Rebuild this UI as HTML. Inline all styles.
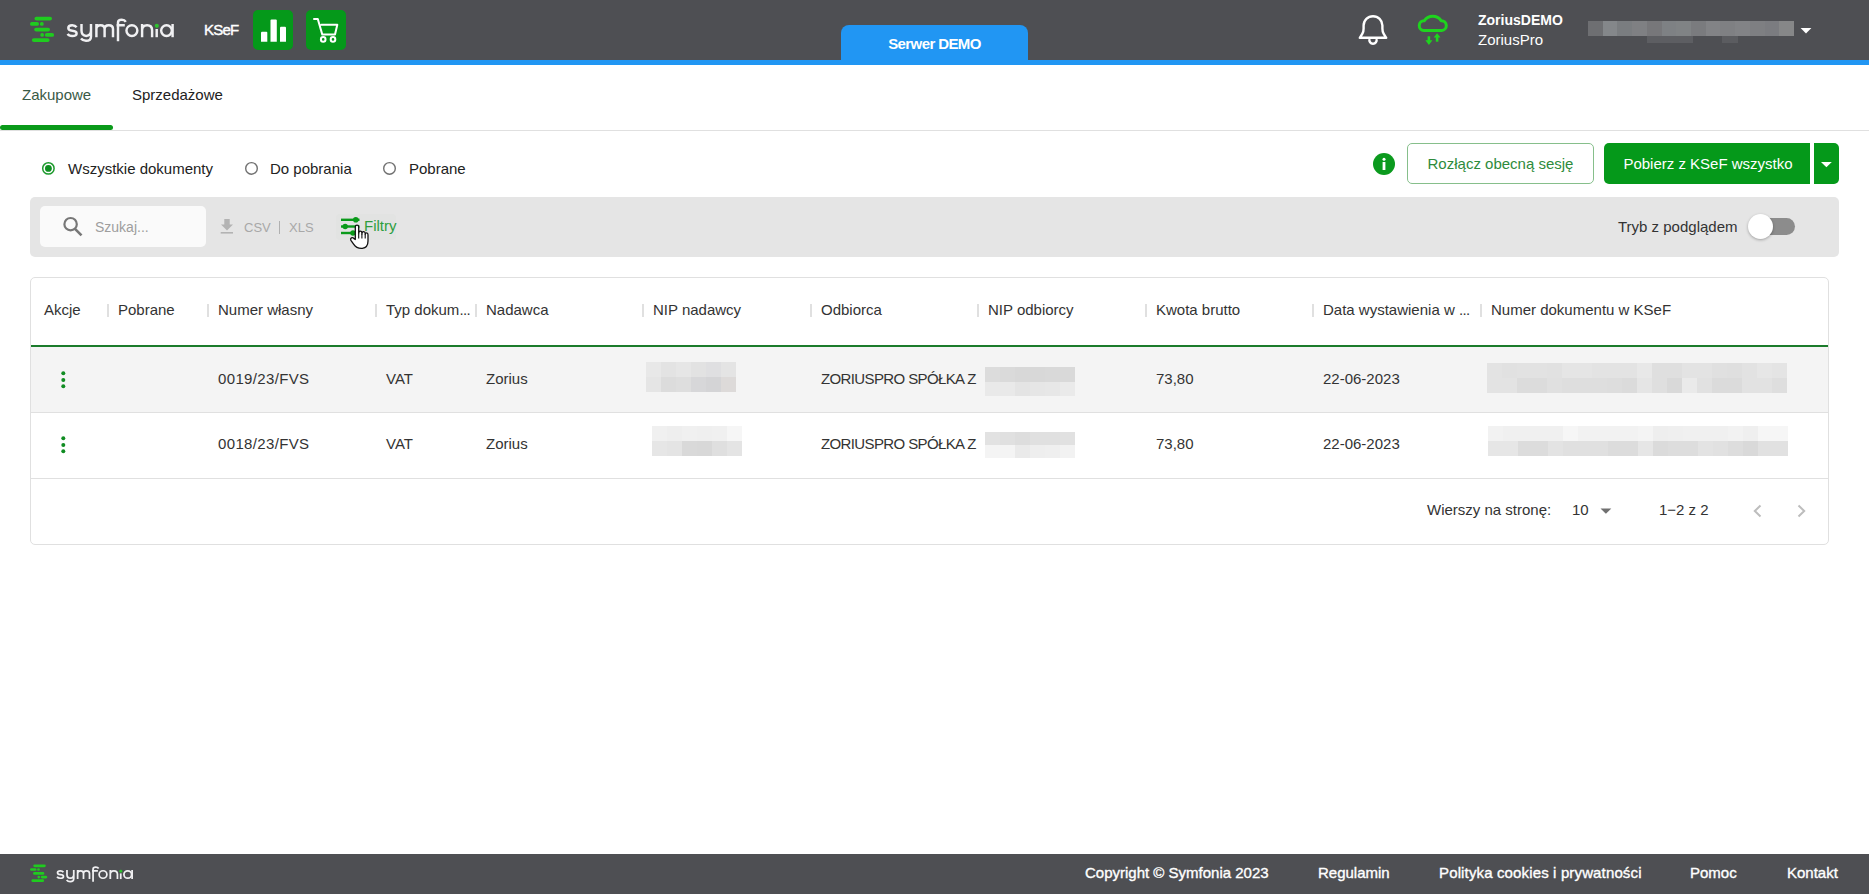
<!DOCTYPE html>
<html lang="pl">
<head>
<meta charset="utf-8">
<title>Symfonia KSeF</title>
<style>
*{margin:0;padding:0;box-sizing:border-box}
html,body{width:1869px;height:894px;overflow:hidden;background:#fff}
body{font-family:"Liberation Sans",sans-serif;color:#333;position:relative}
.a{position:absolute;white-space:nowrap}
.hdr{left:0;top:0;width:1869px;height:60px;background:#4e4f53}
.bline{left:0;top:60px;width:1869px;height:5px;background:#2196f3}
.tab{left:841px;top:25px;width:187px;height:40px;background:#2196f3;border-radius:8px 8px 0 0}
.sq{width:40px;height:40px;background:#05991a;border-radius:5px;top:10px}
.t15{font-size:15px;line-height:18px}
.sep{width:2px;height:13px;background:#e0e0e0;top:304px}
.hd{top:301px;color:#3a3a3a}
.cell{font-size:15px;line-height:18px;color:#333}
.r1{top:370px}
.r2{top:435px}
.ft{top:864px;color:#fff;font-size:15px;line-height:18px;-webkit-text-stroke:0.35px #fff}
</style>
</head>
<body>
<!-- HEADER -->
<div class="a hdr"></div>
<div class="a bline"></div>
<div class="a tab"></div>
<div class="a" style="left:841px;top:35px;width:187px;text-align:center;color:#fff;font-weight:bold;font-size:15px;line-height:18px;letter-spacing:-0.6px">Serwer DEMO</div>

<!-- logo -->
<svg class="a" style="left:0;top:0" width="200" height="60" viewBox="0 0 200 60">
 <g fill="#1fcc1f">
  <rect x="34.5" y="16.7" width="17.5" height="3.8" rx="1.9"/>
  <rect x="30" y="22" width="9" height="3.8" rx="1.9"/>
  <rect x="40" y="22" width="3.6" height="3.8" rx="1.5"/>
  <rect x="34.2" y="27.7" width="15.8" height="3.8" rx="1.9"/>
  <rect x="40.4" y="33" width="3.5" height="3.8" rx="1.5"/>
  <rect x="44.9" y="33" width="9.2" height="3.8" rx="1.9"/>
  <rect x="31.9" y="38.2" width="17.7" height="3.8" rx="1.9"/>
 </g>
 <g fill="none" stroke="#f0f0f2" stroke-width="2.45" stroke-linecap="butt">
  <path d="M76.6 27.3 Q75.2 25.2 72.2 25.2 Q68.3 25.2 68.3 28 Q68.3 30.4 72.3 30.7 Q76.6 31 76.6 33.4 Q76.6 36 72.2 36 Q69 36 67.6 33.8"/>
  <path d="M81.5 24 V30.6 Q81.5 35.9 86.2 35.9 Q91 35.9 91 30.6 V24 M91 30 V36.4 Q91 40.8 86 40.8 Q82.7 40.8 81 38.6"/>
  <path d="M96.4 37.2 V24 M96.4 29 Q96.4 25.2 100.5 25.2 Q104.6 25.2 104.6 29 V37.2 M104.6 29 Q104.6 25.2 108.8 25.2 Q113 25.2 113 29 V37.2"/>
  <path d="M118 41.2 V22.5 Q118 19.8 121.8 19.8 Q124.6 19.8 125.8 21.8 M116.5 25.2 H124.8"/>
  <circle cx="131.9" cy="30.6" r="5.45"/>
  <path d="M142.1 37.2 V24 M142.1 30.3 Q142.1 25.2 147.1 25.2 Q152.1 25.2 152.1 30.3 V37.2"/>
  <path d="M156.7 29 V37.2"/>
  <circle cx="166.5" cy="30.6" r="5.35"/>
  <path d="M172.6 24 V37.2"/>
 </g>
 <circle cx="156.8" cy="25.8" r="2.1" fill="#2fc12f"/>
</svg>

<div class="a" style="left:204px;top:21px;color:#fff;font-size:15px;line-height:18px;letter-spacing:-0.8px;-webkit-text-stroke:0.4px #fff">KSeF</div>
<div class="a sq" style="left:253px"></div>
<div class="a sq" style="left:306px"></div>
<svg class="a" style="left:253px;top:10px" width="40" height="40" viewBox="0 0 40 40">
 <g fill="#fff">
  <path d="M8 22.8 Q8 21.8 9 21.8 H13.3 Q14.3 21.8 14.3 22.8 V31.8 H8 Z"/>
  <path d="M17.5 10.5 Q17.5 9.5 18.5 9.5 H22.8 Q23.8 9.5 23.8 10.5 V31.8 H17.5 Z"/>
  <path d="M27 17.8 Q27 16.8 28 16.8 H32 Q33 16.8 33 17.8 V31.8 H27 Z"/>
 </g>
</svg>
<svg class="a" style="left:306px;top:10px" width="40" height="40" viewBox="0 0 40 40">
 <g fill="none" stroke="#fff" stroke-width="2" stroke-linejoin="round" stroke-linecap="round">
  <path d="M8 9 H11.8 L16.3 24.6 H29 L31.3 14.8 H15.4"/>
  <circle cx="17.2" cy="29.4" r="2.3"/>
  <circle cx="27" cy="29.4" r="2.3"/>
 </g>
</svg>

<!-- bell -->
<svg class="a" style="left:1353px;top:10px" width="40" height="40" viewBox="0 0 40 40">
 <g fill="none" stroke="#fff" stroke-width="2.4" stroke-linejoin="round">
  <path d="M6.8 27.8 H33.2 L30.6 23.6 Q29.4 21.6 29.4 18.4 V15.6 A9.4 9.4 0 0 0 10.6 15.6 V18.4 Q10.6 21.6 9.4 23.6 Z"/>
  <path d="M16.6 29 A3.6 3.6 0 1 0 23.4 29"/>
 </g>
</svg>
<!-- cloud -->
<svg class="a" style="left:1413px;top:10px" width="40" height="40" viewBox="0 0 40 40">
 <g fill="none" stroke="#1ed41e" stroke-width="3" stroke-linejoin="round">
  <path d="M10.9 20.5 H28.7 A4.9 4.9 0 0 0 28.1 10.7 A10.1 10.1 0 0 0 11.4 10.7 A4.9 4.9 0 0 0 10.9 20.5 Z"/>
 </g>
 <g fill="#1ed41e">
  <rect x="14.6" y="26.3" width="2.6" height="5.2"/>
  <path d="M12.4 30.2 H19.4 L15.9 35 Z"/>
  <rect x="22.8" y="26.5" width="2.6" height="5.2"/>
  <path d="M20.7 27.6 H27.5 L24.1 23.2 Z"/>
 </g>
</svg>

<div class="a" style="left:1478px;top:12px;color:#fff;font-weight:bold;font-size:14px;line-height:17px">ZoriusDEMO</div>
<div class="a" style="left:1478px;top:31px;color:#fff;font-size:15px;line-height:18px">ZoriusPro</div>
<div class="a" style="left:1588px;top:21px;width:206px;height:15px;background:linear-gradient(to right,#6e6f72 0.0px 14.72px,#84878a 14.72px 29.44px,#7a7d80 29.44px 44.160000000000004px,#7f8083 44.160000000000004px 58.88px,#77777a 58.88px 73.60000000000001px,#7e8184 73.60000000000001px 88.32000000000001px,#808385 88.32000000000001px 103.04px,#7a7b7e 103.04px 117.76px,#828386 117.76px 132.48000000000002px,#7f8083 132.48000000000002px 147.20000000000002px,#828386 147.20000000000002px 161.92000000000002px,#7e7f82 161.92000000000002px 176.64000000000001px,#7b7c80 176.64000000000001px 191.36px,#868788 191.36px 206px)"></div>
<div class="a" style="left:1647px;top:36px;width:46px;height:7px;background:#5d5e62"></div>
<div class="a" style="left:1722px;top:36px;width:16px;height:7px;background:#5b5c60"></div>
<svg class="a" style="left:1798px;top:26px" width="16" height="10" viewBox="0 0 16 10">
 <path d="M2.6 2 H13.4 L8 7.4 Z" fill="#fff"/>
</svg>
<!-- TABS -->
<div class="a t15" style="left:22px;top:86px;color:#3a5a46">Zakupowe</div>
<div class="a t15" style="left:132px;top:86px;color:#222">Sprzedażowe</div>
<div class="a" style="left:0;top:130px;width:1869px;height:1px;background:#e0e0e0"></div>
<div class="a" style="left:0;top:125px;width:113px;height:5px;background:#0a9a1a;border-radius:3px"></div>

<!-- RADIOS -->
<svg class="a" style="left:40px;top:160px" width="17" height="17" viewBox="0 0 17 17">
 <circle cx="8.4" cy="8.4" r="5.7" fill="none" stroke="#1c9a2c" stroke-width="1.5"/>
 <circle cx="8.4" cy="8.4" r="3.4" fill="#0e8f20"/>
</svg>
<svg class="a" style="left:243px;top:160px" width="17" height="17" viewBox="0 0 17 17">
 <circle cx="8.5" cy="8.4" r="5.8" fill="none" stroke="#707070" stroke-width="1.4"/>
</svg>
<svg class="a" style="left:381px;top:160px" width="17" height="17" viewBox="0 0 17 17">
 <circle cx="8.5" cy="8.4" r="5.8" fill="none" stroke="#707070" stroke-width="1.4"/>
</svg>
<div class="a t15" style="left:68px;top:160px;color:#222">Wszystkie dokumenty</div>
<div class="a t15" style="left:270px;top:160px;color:#222">Do pobrania</div>
<div class="a t15" style="left:409px;top:160px;color:#222">Pobrane</div>

<!-- BUTTONS -->
<svg class="a" style="left:1373px;top:153px" width="22" height="22" viewBox="0 0 22 22">
 <circle cx="11" cy="11" r="11" fill="#0b9a1e"/>
 <circle cx="11" cy="6.3" r="1.5" fill="#fff"/>
 <rect x="9.6" y="9" width="2.8" height="8" fill="#fff"/>
</svg>
<div class="a" style="left:1407px;top:143px;width:187px;height:41px;border:1px solid #86bf8b;border-radius:5px;background:#fff"></div>
<div class="a t15" style="left:1407px;top:155px;width:187px;text-align:center;color:#2e8b3c">Rozłącz obecną sesję</div>
<div class="a" style="left:1604px;top:143px;width:206px;height:41px;background:#05991a;border-radius:5px 0 0 5px"></div>
<div class="a t15" style="left:1605px;top:155px;width:206px;text-align:center;color:#fff">Pobierz z KSeF wszystko</div>
<div class="a" style="left:1814px;top:143px;width:25px;height:41px;background:#05991a;border-radius:0 5px 5px 0"></div>
<svg class="a" style="left:1814px;top:143px" width="25" height="41" viewBox="0 0 25 41">
 <path d="M7 19 H17.8 L12.4 24.3 Z" fill="#fff"/>
</svg>

<!-- TOOLBAR -->
<div class="a" style="left:30px;top:197px;width:1809px;height:60px;background:#e5e5e5;border-radius:5px"></div>
<div class="a" style="left:40px;top:206px;width:166px;height:41px;background:#fafafa;border-radius:5px"></div>
<svg class="a" style="left:58px;top:212px" width="28" height="28" viewBox="0 0 28 28">
 <g fill="none" stroke="#777" stroke-width="2.2">
  <circle cx="12.6" cy="12.2" r="6.2"/>
  <path d="M17 16.8 L23.5 23.3" stroke-width="2.6"/>
 </g>
</svg>
<div class="a" style="left:95px;top:219px;color:#9e9e9e;font-size:14px;line-height:17px">Szukaj...</div>
<svg class="a" style="left:218px;top:216px" width="18" height="20" viewBox="0 0 18 20">
 <path d="M6.3 3 H11.7 V8.6 H15 L9 14.5 L3 8.6 H6.3 Z" fill="#b3b3b3"/>
 <rect x="2.7" y="16" width="12.3" height="1.6" fill="#b3b3b3"/>
</svg>
<div class="a" style="left:244px;top:219px;color:#a8a8a8;font-size:13px;line-height:17px">CSV</div>
<div class="a" style="left:279px;top:221px;width:1px;height:13px;background:#b0b0b0"></div>
<div class="a" style="left:289px;top:219px;color:#a8a8a8;font-size:13px;line-height:17px">XLS</div>
<div class="a" style="left:336px;top:214px;width:60px;height:26px;background:#e2e3e2;border-radius:4px"></div>
<svg class="a" style="left:335px;top:210px" width="40" height="40" viewBox="0 0 40 40">
 <g fill="#0a9a1a">
  <rect x="6" y="8.6" width="18.5" height="2.4"/>
  <circle cx="20.8" cy="9.8" r="2.8"/>
  <rect x="6" y="15.3" width="18.5" height="2.4"/>
  <circle cx="10.2" cy="16.5" r="2.7"/>
  <rect x="6" y="21.8" width="18.5" height="2.4"/>
  <circle cx="18" cy="23" r="2.7"/>
 </g>
</svg>
<div class="a t15" style="left:364px;top:217px;color:#2e9e3e">Filtry</div>
<!-- hand cursor -->
<svg class="a" style="left:335px;top:210px" width="40" height="40" viewBox="0 0 40 40">
 <path d="M20.3 29.5 V17 Q20.3 15.2 22 15.2 Q23.7 15.2 23.7 17 V23.6 Q23.8 21.2 25.3 21.2 Q26.9 21.2 26.9 23 V24 Q27 21.7 28.6 21.7 Q30.2 21.7 30.2 23.6 V24.5 Q30.4 22.8 31.6 22.8 Q33 22.8 33 24.8 V31 Q33 37.6 27.3 38.4 Q21.6 38.8 18.6 34.2 L15.9 30.4 Q15 28.8 16.4 27.9 Q17.8 27.2 19 28.6 Z" fill="#fff" stroke="#111" stroke-width="1.3" stroke-linejoin="round"/>
 <path d="M23.7 24 V28.5 M26.9 24 V28.5 M30.2 24.5 V28.5" stroke="#111" stroke-width="1.1"/>
</svg>

<div class="a t15" style="left:1618px;top:218px;color:#333">Tryb z podglądem</div>
<div class="a" style="left:1750px;top:218px;width:45px;height:17px;background:#8c8c8c;border-radius:9px"></div>
<div class="a" style="left:1748px;top:214px;width:25px;height:25px;background:#fff;border-radius:50%;box-shadow:0 1px 3px rgba(0,0,0,0.3)"></div>

<!-- TABLE CARD -->
<div class="a" style="left:30px;top:277px;width:1799px;height:268px;border:1px solid #e0e0e0;border-radius:5px;background:#fff"></div>
<div class="a" style="left:31px;top:345px;width:1797px;height:2px;background:#1b7b2b"></div>
<div class="a" style="left:31px;top:347px;width:1797px;height:65px;background:#f4f4f4"></div>
<div class="a" style="left:31px;top:412px;width:1797px;height:1px;background:#e0e0e0"></div>
<div class="a" style="left:31px;top:478px;width:1797px;height:1px;background:#e0e0e0"></div>

<div class="a cell hd" style="left:44px">Akcje</div>
<div class="a sep" style="left:107px"></div>
<div class="a cell hd" style="left:118px">Pobrane</div>
<div class="a sep" style="left:207px"></div>
<div class="a cell hd" style="left:218px">Numer własny</div>
<div class="a sep" style="left:375px"></div>
<div class="a cell hd" style="left:386px">Typ dokum<span style="letter-spacing:-0.6px">...</span></div>
<div class="a sep" style="left:475px"></div>
<div class="a cell hd" style="left:486px">Nadawca</div>
<div class="a sep" style="left:642px"></div>
<div class="a cell hd" style="left:653px">NIP nadawcy</div>
<div class="a sep" style="left:810px"></div>
<div class="a cell hd" style="left:821px">Odbiorca</div>
<div class="a sep" style="left:977px"></div>
<div class="a cell hd" style="left:988px">NIP odbiorcy</div>
<div class="a sep" style="left:1145px"></div>
<div class="a cell hd" style="left:1156px">Kwota brutto</div>
<div class="a sep" style="left:1312px"></div>
<div class="a cell hd" style="left:1323px">Data wystawienia w <span style="letter-spacing:-0.6px">...</span></div>
<div class="a sep" style="left:1480px"></div>
<div class="a cell hd" style="left:1491px">Numer dokumentu w KSeF</div>

<!-- rows -->
<svg class="a" style="left:55px;top:368px" width="16" height="24" viewBox="0 0 16 24">
 <g fill="#108c22"><circle cx="8.3" cy="5.2" r="2"/><circle cx="8.3" cy="12" r="2"/><circle cx="8.3" cy="18.3" r="2"/></g>
</svg>
<svg class="a" style="left:55px;top:433px" width="16" height="24" viewBox="0 0 16 24">
 <g fill="#108c22"><circle cx="8.3" cy="5.2" r="2"/><circle cx="8.3" cy="11.9" r="2"/><circle cx="8.3" cy="18.2" r="2"/></g>
</svg>
<div class="a cell r1" style="left:218px;letter-spacing:0.35px">0019/23/FVS</div>
<div class="a cell r1" style="left:386px">VAT</div>
<div class="a cell r1" style="left:486px">Zorius</div>
<div class="a cell r1" style="left:821px;letter-spacing:-0.62px">ZORIUSPRO SPÓŁKA Z</div>
<div class="a cell r1" style="left:1156px">73,80</div>
<div class="a cell r1" style="left:1323px">22-06-2023</div>
<div class="a cell r2" style="left:218px;letter-spacing:0.35px">0018/23/FVS</div>
<div class="a cell r2" style="left:386px">VAT</div>
<div class="a cell r2" style="left:486px">Zorius</div>
<div class="a cell r2" style="left:821px;letter-spacing:-0.62px">ZORIUSPRO SPÓŁKA Z</div>
<div class="a cell r2" style="left:1156px">73,80</div>
<div class="a cell r2" style="left:1323px">22-06-2023</div>

<div class="a" style="left:646px;top:362px;width:90px;height:15px;background:linear-gradient(to right,#e8e8e8 0px 15px,#e3e3e3 15px 30px,#e6e6e6 30px 45px,#e2e2e2 45px 60px,#dfdfe1 60px 75px,#e4e4e4 75px 90px)"></div>
<div class="a" style="left:646px;top:377px;width:90px;height:15px;background:linear-gradient(to right,#e5e5e5 0px 15px,#dcdcdc 15px 30px,#dedede 30px 45px,#d7d7d9 45px 60px,#d4d4d6 60px 75px,#dddad9 75px 90px)"></div>
<div class="a" style="left:652px;top:426px;width:90px;height:15px;background:linear-gradient(to right,#f0f0f0 0px 15px,#eeeeee 15px 30px,#f0f0f0 30px 45px,#efefef 45px 60px,#f0f0f0 60px 75px,#f6f6f6 75px 90px)"></div>
<div class="a" style="left:652px;top:441px;width:90px;height:15px;background:linear-gradient(to right,#e6e6e6 0px 15px,#e4e4e4 15px 30px,#d9d9d9 30px 45px,#d8d8d8 45px 60px,#dfdfdf 60px 75px,#e4e4e4 75px 90px)"></div>
<div class="a" style="left:985px;top:367px;width:90px;height:15px;background:linear-gradient(to right,#dcdcdc 0px 15px,#dadada 15px 30px,#d8d8d8 30px 45px,#d8d8d8 45px 60px,#d9d9d9 60px 75px,#d9d9d9 75px 90px)"></div>
<div class="a" style="left:985px;top:382px;width:90px;height:14px;background:linear-gradient(to right,#e9e9e9 0px 15px,#e9e9e9 15px 30px,#e4e4e4 30px 45px,#e6e6e6 45px 60px,#e7e7e7 60px 75px,#eaeaea 75px 90px)"></div>
<div class="a" style="left:985px;top:432px;width:90px;height:13px;background:linear-gradient(to right,#e2e2e2 0px 15px,#e0e0e0 15px 30px,#dddddd 30px 45px,#e0e0e0 45px 60px,#e0e0e0 60px 75px,#e1e1e1 75px 90px)"></div>
<div class="a" style="left:985px;top:445px;width:90px;height:13px;background:linear-gradient(to right,#f4f4f4 0px 15px,#f4f4f4 15px 30px,#eaeaea 30px 45px,#eeeeee 45px 60px,#efefef 60px 75px,#f2f2f2 75px 90px)"></div>
<div class="a" style="left:1487px;top:363px;width:300px;height:15px;background:linear-gradient(to right,#e3e3e3 0px 15px,#e1e1e1 15px 30px,#e2e2e2 30px 45px,#e2e2e2 45px 60px,#e1e1e1 60px 75px,#e5e5e5 75px 90px,#e5e5e5 90px 105px,#e3e3e3 105px 120px,#e3e3e3 120px 135px,#e3e3e3 135px 150px,#e8e8e8 150px 165px,#dfdfdf 165px 180px,#dfdfdf 180px 195px,#e3e3e3 195px 210px,#e3e3e3 210px 225px,#e0e0e0 225px 240px,#dfdfdf 240px 255px,#e2e2e2 255px 270px,#e6e6e6 270px 285px,#e4e4e4 285px 300px)"></div>
<div class="a" style="left:1487px;top:378px;width:300px;height:15px;background:linear-gradient(to right,#e3e3e3 0px 15px,#e3e3e3 15px 30px,#dcdcdc 30px 45px,#dcdcdc 45px 60px,#e0e0e0 60px 75px,#dedede 75px 90px,#dedede 90px 105px,#dedede 105px 120px,#dddddd 120px 135px,#dbdbdb 135px 150px,#e5e5e5 150px 165px,#dfdfdf 165px 180px,#d9d9d9 180px 195px,#eaeaea 195px 210px,#e1e1e1 210px 225px,#dbdbdb 225px 240px,#dbdbdb 240px 255px,#e2e2e2 255px 270px,#e2e2e2 270px 285px,#dedede 285px 300px)"></div>
<div class="a" style="left:1488px;top:426px;width:300px;height:15px;background:linear-gradient(to right,#f2f2f2 0px 15px,#f0f0f0 15px 30px,#f0f0f0 30px 45px,#f0f0f0 45px 60px,#f0f0f0 60px 75px,#f6f6f6 75px 90px,#f2f2f2 90px 105px,#f2f2f2 105px 120px,#f2f2f2 120px 135px,#f2f2f2 135px 150px,#f4f4f4 150px 165px,#eeeeee 165px 180px,#efefef 180px 195px,#f0f0f0 195px 210px,#f0f0f0 210px 225px,#f0f0f0 225px 240px,#f2f2f2 240px 255px,#efefef 255px 270px,#f6f6f6 270px 285px,#f6f6f6 285px 300px)"></div>
<div class="a" style="left:1488px;top:441px;width:300px;height:15px;background:linear-gradient(to right,#e6e6e6 0px 15px,#e6e6e6 15px 30px,#dcdcdc 30px 45px,#dcdcdc 45px 60px,#e3e3e3 60px 75px,#e0e0e0 75px 90px,#e0e0e0 90px 105px,#e0e0e0 105px 120px,#dcdcdc 120px 135px,#dcdcdc 135px 150px,#e6e6e6 150px 165px,#dbdbdb 165px 180px,#dddddd 180px 195px,#dddddd 195px 210px,#e3e3e3 210px 225px,#e1e1e1 225px 240px,#dddddd 240px 255px,#d9d9d9 255px 270px,#e1e1e1 270px 285px,#e1e1e1 285px 300px)"></div>

<!-- pagination -->
<div class="a cell" style="left:1427px;top:501px">Wierszy na stronę:</div>
<div class="a cell" style="left:1572px;top:501px">10</div>
<svg class="a" style="left:1598px;top:505px" width="16" height="12" viewBox="0 0 16 12">
 <path d="M2.5 3.4 H13.3 L7.9 8.7 Z" fill="#707070"/>
</svg>
<div class="a cell" style="left:1659px;top:501px">1−2 z 2</div>
<svg class="a" style="left:1746px;top:500px" width="20" height="22" viewBox="0 0 20 22">
 <path d="M14.5 5.5 L8.8 11 L14.5 16.5" fill="none" stroke="#bdbdbd" stroke-width="2"/>
</svg>
<svg class="a" style="left:1793px;top:500px" width="20" height="22" viewBox="0 0 20 22">
 <path d="M5.5 5.5 L11.2 11 L5.5 16.5" fill="none" stroke="#bdbdbd" stroke-width="2"/>
</svg>

<!-- FOOTER -->
<div class="a" style="left:0;top:854px;width:1869px;height:40px;background:#4e4f53"></div>
<svg class="a" style="left:0;top:854px" width="200" height="40" viewBox="0 0 200 40">
 <g transform="translate(8.6,-1.0) scale(0.715,0.69)">
 <g fill="#1fcc1f">
  <rect x="34.5" y="16.7" width="17.5" height="3.8" rx="1.9"/>
  <rect x="30" y="22" width="9" height="3.8" rx="1.9"/>
  <rect x="40" y="22" width="3.6" height="3.8" rx="1.5"/>
  <rect x="34.2" y="27.7" width="15.8" height="3.8" rx="1.9"/>
  <rect x="40.4" y="33" width="3.5" height="3.8" rx="1.5"/>
  <rect x="44.9" y="33" width="9.2" height="3.8" rx="1.9"/>
  <rect x="31.9" y="38.2" width="17.7" height="3.8" rx="1.9"/>
 </g>
 </g>
 <g transform="translate(8.7,-0.6) scale(0.715,0.69)">
<g fill="none" stroke="#f0f0f2" stroke-width="2.45" stroke-linecap="butt">
  <path d="M76.6 27.3 Q75.2 25.2 72.2 25.2 Q68.3 25.2 68.3 28 Q68.3 30.4 72.3 30.7 Q76.6 31 76.6 33.4 Q76.6 36 72.2 36 Q69 36 67.6 33.8"/>
  <path d="M81.5 24 V30.6 Q81.5 35.9 86.2 35.9 Q91 35.9 91 30.6 V24 M91 30 V36.4 Q91 40.8 86 40.8 Q82.7 40.8 81 38.6"/>
  <path d="M96.4 37.2 V24 M96.4 29 Q96.4 25.2 100.5 25.2 Q104.6 25.2 104.6 29 V37.2 M104.6 29 Q104.6 25.2 108.8 25.2 Q113 25.2 113 29 V37.2"/>
  <path d="M118 41.2 V22.5 Q118 19.8 121.8 19.8 Q124.6 19.8 125.8 21.8 M116.5 25.2 H124.8"/>
  <circle cx="131.9" cy="30.6" r="5.45"/>
  <path d="M142.1 37.2 V24 M142.1 30.3 Q142.1 25.2 147.1 25.2 Q152.1 25.2 152.1 30.3 V37.2"/>
  <path d="M156.7 29 V37.2"/>
  <circle cx="166.5" cy="30.6" r="5.35"/>
  <path d="M172.6 24 V37.2"/>
 </g>
 <circle cx="156.8" cy="25.8" r="2.1" fill="#2fc12f"/>
 </g>
</svg>
<div class="a ft" style="left:1085px">Copyright © Symfonia 2023</div>
<div class="a ft" style="left:1318px">Regulamin</div>
<div class="a ft" style="left:1439px;letter-spacing:0.14px">Polityka cookies i prywatności</div>
<div class="a ft" style="left:1690px">Pomoc</div>
<div class="a ft" style="left:1787px">Kontakt</div>
</body>
</html>
